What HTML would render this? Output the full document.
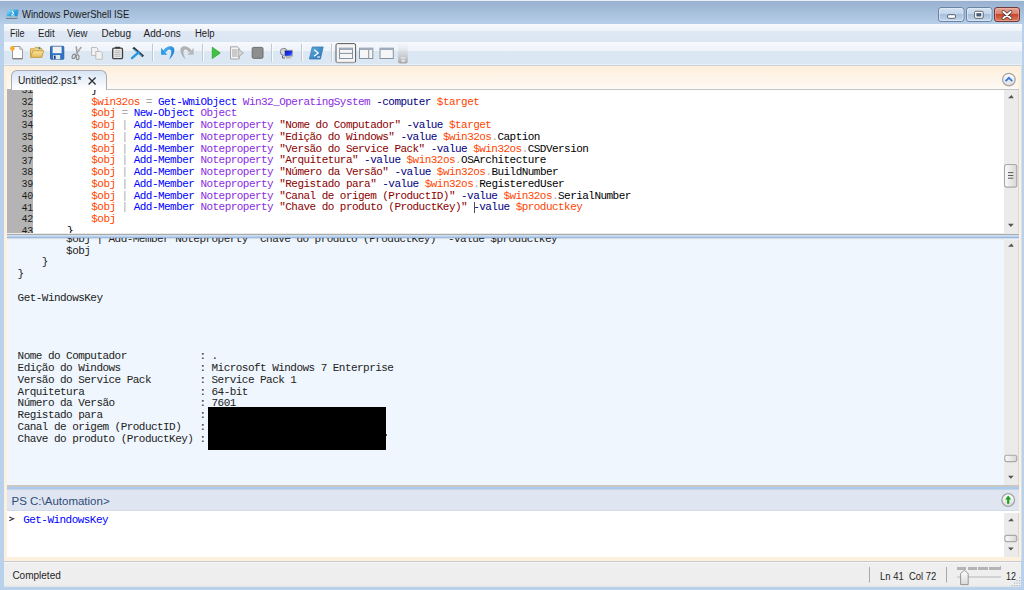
<!DOCTYPE html>
<html><head><meta charset="utf-8">
<style>
*{margin:0;padding:0;box-sizing:border-box}
html,body{width:1024px;height:590px;overflow:hidden;background:#b9d1ea;font-family:"Liberation Sans",sans-serif}
.a{position:absolute}
#title{left:0;top:0;width:1024px;height:24px;background:linear-gradient(#97b0cf,#b6cee7)}
#topline{left:0;top:0;width:1024px;height:1px;background:#e9eff6}
#ttext{left:22px;top:8.6px;font-size:10.4px;color:#1a1a1a;white-space:pre;transform-origin:0 0;transform:scaleX(0.915)}
#menu{left:4px;top:24px;width:1018px;height:18px;background:linear-gradient(#f7fafd 0,#eef3fa 7px,#dfe8f4 7px,#dce6f3 100%)}
#tool{left:4px;top:42px;width:1018px;height:23px;background:linear-gradient(#f6f9fd 0,#eef3fa 9px,#dce7f4 9px,#dce7f4 22px,#e8f0fa 22px)}
#toolline{left:4px;top:65px;width:1018px;height:1px;background:#cdd2d8}
.mi{position:absolute;top:28.3px;font-size:10px;color:#1e1e1e;white-space:pre;transform-origin:0 0}
#tabs{left:4px;top:66px;width:1018px;height:23px;background:linear-gradient(#fdeedb,#fefaf5)}
#lframe{left:4px;top:66px;width:3px;height:495px;background:#fdf0df}
#rframe{left:1018px;top:66px;width:4px;height:495px;background:linear-gradient(90deg,#fdf0df 0,#fdf0df 3px,#d4dde8 3px)}
#tab{left:11px;top:70px;width:96px;height:20px;z-index:2;border:1px solid #a8adb4;border-bottom:none;border-radius:6px 6px 0 0;background:linear-gradient(#d9e5f5,#ffffff)}
#tabtext{z-index:3;left:18.3px;top:75px;font-size:10px;color:#1e1e1e;white-space:pre;transform-origin:0 0;transform:scaleX(1.02)}
#editor{left:7px;top:89px;width:1012px;height:145px;background:#fff;border-top:1px solid #c4c4c4}
#gutter{left:7px;top:89px;width:26px;height:144px;background:#b4b4b4}
.code{position:absolute;font-family:"Liberation Mono",monospace;font-size:11px;letter-spacing:-0.54px;white-space:pre;line-height:11.75px}
.ln{position:absolute;font-family:"Liberation Mono",monospace;font-size:10px;letter-spacing:-0.3px;white-space:pre;line-height:11.75px;color:#1e1e1e;text-align:right;width:25px}
.v{color:#ff4500}.c{color:#0000ff}.g{color:#8a2be2}.p{color:#000080}.s{color:#8b0000}.o{color:#a9a9a9}.k{color:#000}
#split1{left:7px;top:233px;width:1012px;height:7px;background:linear-gradient(#ebebea 0,#ebebea 1px,#ababab 1px,#ababab 2px,#cfdff0 2px,#cfdff0 3px,#b6d3f4 3px,#b6d3f4 4px,#9fbada 4px,#9fbada 5px,#d5dde5 5px,#d5dde5 6px,#eaf2fb 6px)}
#split1b{display:none}
#output{left:7px;top:240px;width:1012px;height:245px;background:#eff6fd}
#split2{left:7px;top:485px;width:1012px;height:5px;background:linear-gradient(#c9c7c3 0,#c9c7c3 2px,#aacaf0 2px,#aacaf0 4px,#c6d3e2 4px)}
#split2b{display:none}
#cmdhdr{left:7px;top:490px;width:1012px;height:21px;background:linear-gradient(#dfe6f1 0,#dfe6f1 20px,#d4dce8 20px)}
#cmd{left:7px;top:511px;width:1012px;height:46px;background:#fff}
#cmdbot{left:4px;top:557px;width:1017px;height:4px;background:#fdf0df}
#status{left:4px;top:561px;width:1017px;height:26px;background:linear-gradient(#c8c9cc 0,#c8c9cc 1px,#f6f6f6 1px,#f6f6f6 2px,#efefef 2px,#eeeeee 24px,#e6e6e6 25px)}
#pstext{left:11.5px;top:495px;font-size:11.5px;color:#2f4c78;white-space:pre;transform-origin:0 0;transform:scaleX(1.0)}
#completed{left:12.4px;top:569.8px;font-size:10px;color:#1e1e1e;white-space:pre}
#lncol{left:880px;top:570px;font-size:10.5px;color:#1e1e1e;white-space:pre;transform-origin:0 0;transform:scaleX(0.9)}
#zoom{left:1005.6px;top:570px;font-size:10.5px;color:#1e1e1e;white-space:pre;transform-origin:0 0;transform:scaleX(0.85)}
</style></head><body>
<div class="a" id="title"></div>
<div class="a" id="topline"></div>
<div class="a" id="ttext">Windows PowerShell ISE</div>
<div class="a" id="menu"></div>
<div class="mi" style="left:10.3px;transform:scaleX(0.91)">File</div>
<div class="mi" style="left:38.2px;transform:scaleX(0.96)">Edit</div>
<div class="mi" style="left:67.2px;transform:scaleX(0.95)">View</div>
<div class="mi" style="left:101.5px;transform:scaleX(1.0)">Debug</div>
<div class="mi" style="left:143.5px;transform:scaleX(1.0)">Add-ons</div>
<div class="mi" style="left:194.7px;transform:scaleX(0.95)">Help</div>
<div class="a" id="tool"></div>
<div class="a" id="toolline"></div>
<div class="a" id="tabs"></div>
<div class="a" id="lframe"></div>
<div class="a" id="rframe"></div>
<div class="a" id="tab"></div>
<div class="a" id="tabtext">Untitled2.ps1*</div>
<div class="a" id="editor"></div>
<div class="a" id="gutter"></div>
<div class="a" id="split1"></div>
<div class="a" id="split1b"></div>
<div class="a" id="output"></div>
<div class="a" id="split2"></div>
<div class="a" id="split2b"></div>
<div class="a" id="cmdhdr"></div>
<div class="a" id="cmd"></div>
<div class="a" id="cmdbot"></div>
<div class="a" id="status"></div>
<div class="a" id="pstext">PS C:\Automation&gt;</div>
<div class="a" id="completed">Completed</div>
<div class="a" id="lncol">Ln 41  Col 72</div>
<div class="a" id="zoom">12</div>
<div class="a" style="left:7px;top:90px;width:997px;height:143px;overflow:hidden">
<div class="code" style="left:35.8px;top:-5.1px">        <span class="k">}</span>
        <span class="v">$win32os</span> <span class="o">=</span> <span class="c">Get-WmiObject</span> <span class="g">Win32_OperatingSystem</span> <span class="p">-computer</span> <span class="v">$target</span>
        <span class="v">$obj</span> <span class="o">=</span> <span class="c">New-Object</span> <span class="g">Object</span>
        <span class="v">$obj</span> <span class="o">|</span> <span class="c">Add-Member</span> <span class="g">Noteproperty</span> <span class="s">"Nome do Computador"</span> <span class="p">-value</span> <span class="v">$target</span>
        <span class="v">$obj</span> <span class="o">|</span> <span class="c">Add-Member</span> <span class="g">Noteproperty</span> <span class="s">"Edição do Windows"</span> <span class="p">-value</span> <span class="v">$win32os</span><span class="o">.</span><span class="k">Caption</span>
        <span class="v">$obj</span> <span class="o">|</span> <span class="c">Add-Member</span> <span class="g">Noteproperty</span> <span class="s">"Versão do Service Pack"</span> <span class="p">-value</span> <span class="v">$win32os</span><span class="o">.</span><span class="k">CSDVersion</span>
        <span class="v">$obj</span> <span class="o">|</span> <span class="c">Add-Member</span> <span class="g">Noteproperty</span> <span class="s">"Arquitetura"</span> <span class="p">-value</span> <span class="v">$win32os</span><span class="o">.</span><span class="k">OSArchitecture</span>
        <span class="v">$obj</span> <span class="o">|</span> <span class="c">Add-Member</span> <span class="g">Noteproperty</span> <span class="s">"Número da Versão"</span> <span class="p">-value</span> <span class="v">$win32os</span><span class="o">.</span><span class="k">BuildNumber</span>
        <span class="v">$obj</span> <span class="o">|</span> <span class="c">Add-Member</span> <span class="g">Noteproperty</span> <span class="s">"Registado para"</span> <span class="p">-value</span> <span class="v">$win32os</span><span class="o">.</span><span class="k">RegisteredUser</span>
        <span class="v">$obj</span> <span class="o">|</span> <span class="c">Add-Member</span> <span class="g">Noteproperty</span> <span class="s">"Canal de origem (ProductID)"</span> <span class="p">-value</span> <span class="v">$win32os</span><span class="o">.</span><span class="k">SerialNumber</span>
        <span class="v">$obj</span> <span class="o">|</span> <span class="c">Add-Member</span> <span class="g">Noteproperty</span> <span class="s">"Chave do produto (ProductKey)"</span> <span class="p">-value</span> <span class="v">$productkey</span>
        <span class="v">$obj</span>
    <span class="k">}</span></div>
<div class="ln" style="left:1px;top:-5.0px">31
32
33
34
35
36
37
38
39
40
41
42
43</div>
<div class="a" style="left:467px;top:112px;width:1px;height:11px;background:#505050"></div>
</div>
<div class="a" style="left:7px;top:238px;width:997px;height:247px;overflow:hidden">
<div class="code" style="left:10.6px;top:-4.2px;color:#222">        $obj | Add-Member Noteproperty "Chave do produto (ProductKey)" -value $productkey
        $obj
    }
}

Get-WindowsKey




Nome do Computador            : .
Edição do Windows             : Microsoft Windows 7 Enterprise
Versão do Service Pack        : Service Pack 1
Arquitetura                   : 64-bit
Número da Versão              : 7601
Registado para                : 
Canal de origem (ProductID)   : 
Chave do produto (ProductKey) : </div>
</div>
<div class="code" style="left:23.2px;top:514.6px;color:#0000ff">Get-WindowsKey</div>
<div class="a" style="left:208px;top:407px;width:178px;height:43px;background:#000"></div>
<div class="a" style="left:386px;top:434px;width:1px;height:2px;background:#555"></div>
<svg class="a" style="left:0;top:0;z-index:4" width="1024" height="590" viewBox="0 0 1024 590">
<defs>
<linearGradient id="gbtn" x1="0" y1="0" x2="0" y2="1"><stop offset="0" stop-color="#d6e4f3"/><stop offset="0.45" stop-color="#c3d6eb"/><stop offset="0.47" stop-color="#a5bedb"/><stop offset="1" stop-color="#c6d9ee"/></linearGradient>
<linearGradient id="gcls" x1="0" y1="0" x2="0" y2="1"><stop offset="0" stop-color="#eaa898"/><stop offset="0.45" stop-color="#dc806c"/><stop offset="0.47" stop-color="#c5432a"/><stop offset="1" stop-color="#e08060"/></linearGradient>
<linearGradient id="gps" x1="0" y1="0" x2="1" y2="1"><stop offset="0" stop-color="#8fdcf6"/><stop offset="0.5" stop-color="#2a9ee0"/><stop offset="1" stop-color="#1770b8"/></linearGradient>
<linearGradient id="gps2" x1="0" y1="0" x2="1" y2="1"><stop offset="0" stop-color="#5ab0e0"/><stop offset="1" stop-color="#2a70b4"/></linearGradient>
<linearGradient id="gcirc" x1="0" y1="0" x2="0" y2="1"><stop offset="0" stop-color="#ffffff"/><stop offset="1" stop-color="#dcdcdc"/></linearGradient>
<linearGradient id="gthumb" x1="0" y1="0" x2="1" y2="0"><stop offset="0" stop-color="#fbfbfb"/><stop offset="1" stop-color="#d6d6d6"/></linearGradient>
<linearGradient id="gover" x1="0" y1="0" x2="0" y2="1"><stop offset="0" stop-color="#eeeeee" stop-opacity="0.2"/><stop offset="1" stop-color="#a8a8a8"/></linearGradient>
<linearGradient id="gfold" x1="0" y1="0" x2="0" y2="1"><stop offset="0" stop-color="#fbe7a0"/><stop offset="1" stop-color="#e2b858"/></linearGradient>
<linearGradient id="gthumb2" x1="0" y1="0" x2="0" y2="1"><stop offset="0" stop-color="#ffffff"/><stop offset="1" stop-color="#dadada"/></linearGradient>
</defs>
<!-- title icon -->
<linearGradient id="gti" x1="0" y1="0" x2="1" y2="1"><stop offset="0" stop-color="#a8ecff"/><stop offset="0.45" stop-color="#30a8e4"/><stop offset="1" stop-color="#0a7ac8"/></linearGradient>
<path d="M7.8,9.6 H18.6 L17.2,18.6 H6.2 Z" fill="url(#gti)" stroke="#8ab0c8" stroke-width="0.5"/>
<path d="M6.5,17.1 H17.4" stroke="#ecd6ce" stroke-width="1.2"/>
<path d="M6.2,18.4 H17.2" stroke="#707880" stroke-width="0.9"/>
<path d="M12,10.9 L13.6,13.3 L11.5,15.4" stroke="#ffffff" stroke-width="1.1" fill="none"/>
<path d="M12.6,15.8 H14.6" stroke="#e8f8ff" stroke-width="0.9"/>
<!-- window buttons -->
<rect x="938.5" y="7.5" width="25.5" height="14" rx="2.5" fill="url(#gbtn)" stroke="#6c83a3"/>
<rect x="939.5" y="8.5" width="23.5" height="12" rx="2" fill="none" stroke="#e4eef9" stroke-opacity="0.6"/>
<rect x="947.5" y="14.7" width="8" height="3.6" rx="1.3" fill="#ffffff" stroke="#4c5664" stroke-width="0.9"/>
<rect x="966.5" y="7.5" width="25.5" height="14" rx="2.5" fill="url(#gbtn)" stroke="#6c83a3"/>
<rect x="967.5" y="8.5" width="23.5" height="12" rx="2" fill="none" stroke="#e4eef9" stroke-opacity="0.6"/>
<rect x="974.6" y="11.3" width="8.6" height="7" rx="1.2" fill="#ffffff" stroke="#4c5664" stroke-width="0.9"/>
<rect x="976.8" y="13.5" width="4.2" height="2.6" fill="#445e88" stroke="#4c5664" stroke-width="0.6"/>
<rect x="994.5" y="7.5" width="25" height="14" rx="2.5" fill="url(#gcls)" stroke="#6e3a3a"/>
<rect x="995.5" y="8.5" width="23" height="12" rx="2" fill="none" stroke="#f4c0b0" stroke-opacity="0.5"/>
<path d="M1003.3,11.8 L1010.7,18.2 M1010.7,11.8 L1003.3,18.2" stroke="#4a3434" stroke-width="3.4" stroke-linecap="round"/>
<path d="M1003.3,11.8 L1010.7,18.2 M1010.7,11.8 L1003.3,18.2" stroke="#ffffff" stroke-width="1.9" stroke-linecap="round"/>
<!-- toolbar: new -->
<path d="M12.5,46.5 H19.8 L22.5,49.2 V59 H12.5 Z" fill="#fdfdfd" stroke="#9c9c9c"/>
<path d="M19.8,46.5 V49.2 H22.5" fill="#dedede" stroke="#a8a8a8"/>
<path d="M12.8,58.6 H22.3" stroke="#7a7a7a" stroke-width="1"/>
<circle cx="12.4" cy="48.4" r="2.3" fill="#f7ad2e"/>
<!-- open -->
<path d="M30.5,56.8 V48.8 H34 L35.2,47.4 H40 L41,48.8 H42 V56.8 Z" fill="#f0d078" stroke="#c8a040" stroke-width="0.9"/>
<path d="M30.6,57.4 L32.8,50.8 H43.8 L41.6,57.4 Z" fill="url(#gfold)" stroke="#c29c44" stroke-width="0.9"/>
<circle cx="39.5" cy="48.2" r="1" fill="#2a80d0"/>
<!-- save -->
<rect x="50.5" y="46.3" width="13.3" height="13" rx="0.8" fill="#2f72c4" stroke="#2a5ea8" stroke-width="0.9"/>
<rect x="52.6" y="46.6" width="9" height="6.6" fill="#f2f2f2"/>
<rect x="53.2" y="55" width="7" height="4.3" fill="#dfe6ee"/>
<rect x="54" y="55.6" width="1.6" height="3.5" fill="#1c3a70"/>
<!-- cut -->
<path d="M76.2,46.4 L77.2,53.8" stroke="#9c9c9c" stroke-width="1.5"/>
<path d="M81.3,47 L76.4,53.8" stroke="#a4a4a4" stroke-width="1.5"/>
<ellipse cx="73.8" cy="56.3" rx="1.5" ry="2.3" transform="rotate(25 73.8 56.3)" fill="#e8e8e8" stroke="#858585" stroke-width="1.1"/>
<ellipse cx="77.6" cy="57.2" rx="1.4" ry="2.4" fill="#e8e8e8" stroke="#858585" stroke-width="1.1"/>
<!-- copy -->
<path d="M91.5,47.5 H96.5 L98,49 V55.5 H91.5 Z" fill="#f2f2f2" stroke="#bdbdbd"/>
<path d="M95.8,51.5 H100.8 L102.3,53 V59.2 H95.8 Z" fill="#f2f2f2" stroke="#bdbdbd"/>
<!-- paste -->
<rect x="112.7" y="48.2" width="9.8" height="10.4" rx="1.2" fill="#ececec" stroke="#3e3e3e" stroke-width="1.3"/>
<path d="M115,48.6 V47.4 Q115,46.8 115.6,46.8 H119.6 Q120.2,46.8 120.2,47.4 V48.6 Z" fill="#3e3e3e"/>
<path d="M114.6,50.8 H120.6 M114.6,52.6 H120.6 M114.6,54.4 H120.6 M114.6,56.2 H120.6" stroke="#a8a8a8" stroke-width="0.8"/>
<!-- clear -->
<path d="M133.2,47.6 L143.2,56.4" stroke="#2c3844" stroke-width="2.4"/>
<path d="M134.2,49.6 L141.6,56.2" stroke="#5ab8ea" stroke-width="1.2"/>
<path d="M138.6,52.4 L132,58.2" stroke="#2a98e0" stroke-width="2.4" stroke-linecap="round"/>
<!-- separators -->
<g stroke-width="1">
<path d="M152.5,43.7 V61.7 M202.5,43.7 V61.7 M271.5,43.7 V61.7 M301.5,43.7 V61.7 M331.5,43.7 V61.7" stroke="#c2c9d2"/>
<path d="M153.5,43.7 V61.7 M203.5,43.7 V61.7 M272.5,43.7 V61.7 M302.5,43.7 V61.7 M332.5,43.7 V61.7" stroke="#f8fbfe"/>
</g>
<!-- undo -->
<linearGradient id="gundo" x1="0" y1="0" x2="1" y2="1"><stop offset="0" stop-color="#4cb8f4"/><stop offset="1" stop-color="#1670c4"/></linearGradient>
<path d="M163.2,50.6 C165.5,46.5 171.5,44.6 173.8,47.8 C175.6,50.6 173.4,56 168.8,59.8 C171.2,55.6 172,51.6 170.6,50 C169.2,48.6 166.8,50.2 165.8,52.6 Z" fill="url(#gundo)"/>
<path d="M161.1,47.7 L161.1,54.7 L167.2,54.7 Z" fill="#2a98e4"/>
<g transform="matrix(-1,0,0,1,354.8,0)">
<path d="M163.2,50.6 C165.5,46.5 171.5,44.6 173.8,47.8 C175.6,50.6 173.4,56 168.8,59.8 C171.2,55.6 172,51.6 170.6,50 C169.2,48.6 166.8,50.2 165.8,52.6 Z" fill="#b2b2b2"/>
<path d="M161.1,47.7 L161.1,54.7 L167.2,54.7 Z" fill="#b8b8b8"/>
</g>
<!-- run -->
<path d="M212.3,47.2 L220.2,52.9 L212.3,58.6 Z" fill="#3ec43e" stroke="#2e9e2e" stroke-width="0.8"/>
<!-- run selection -->
<path d="M230.5,46.8 H237.5 L239.2,48.5 V59 H230.5 Z" fill="#f4f4f4" stroke="#a4a4a4"/>
<path d="M232,50 H237 M232,52 H237 M232,54 H237 M232,56 H237" stroke="#8c8c8c" stroke-width="0.8"/>
<path d="M238.2,48.8 L243.4,53 L238.2,57.2 Z" fill="#d4d4d4" stroke="#a0a0a0" stroke-width="0.8"/>
<!-- stop -->
<rect x="252.2" y="47.4" width="10.8" height="10.9" rx="1.3" fill="#8e8e8e" stroke="#6c6c6c"/>
<!-- remote -->
<circle cx="283.8" cy="51.8" r="3.5" fill="#d4dade" stroke="#7c848c" stroke-width="1"/>
<path d="M282.5,55.6 V58 H285" stroke="#555" stroke-width="0.9" fill="none"/>
<linearGradient id="gmon" x1="0" y1="0" x2="1" y2="1"><stop offset="0" stop-color="#0818b8"/><stop offset="0.6" stop-color="#1838f0"/><stop offset="1" stop-color="#7aa0ff"/></linearGradient>
<rect x="284.6" y="50.2" width="8" height="6" fill="url(#gmon)" stroke="#b8b090" stroke-width="0.8"/>
<path d="M286,57.8 H291" stroke="#b4b4b4" stroke-width="1.4"/>
<!-- ps icon -->
<path d="M312.3,47 H323.2 L320.4,59 H309.4 Z" fill="url(#gps2)" stroke="#3a7ab0" stroke-width="0.8" stroke-linejoin="round"/>
<path d="M314.2,49.8 L318.2,53 L314,56.2" stroke="#ffffff" stroke-width="1.3" fill="none"/>
<path d="M317.2,57 H320" stroke="#ffffff" stroke-width="1.1"/>
<!-- layout pressed -->
<rect x="336" y="43.6" width="19.6" height="19" rx="1.6" fill="#f4f4f4" stroke="#585858"/>
<path d="M336.5,62 H355" stroke="#d8d8d8"/>
<rect x="339.5" y="48.2" width="13" height="10.3" fill="#f6f6f6" stroke="#8592a2"/>
<rect x="339.5" y="48.2" width="13" height="1.8" fill="#9eabbb"/>
<path d="M339.5,53.4 H352.5" stroke="#8592a2"/>
<rect x="359.5" y="48.2" width="13.3" height="10.3" fill="#f6f6f6" stroke="#8592a2"/>
<rect x="359.5" y="48.2" width="13.3" height="1.8" fill="#9eabbb"/>
<path d="M368.7,50 V58.5" stroke="#8592a2"/>
<rect x="380" y="48.2" width="13.3" height="10.3" fill="#f6f6f6" stroke="#8592a2"/>
<rect x="380" y="48.2" width="13.3" height="1.8" fill="#9eabbb"/>
<!-- overflow -->
<rect x="398" y="43.2" width="9.8" height="20.2" rx="2" fill="url(#gover)"/>
<path d="M401,58 H405.5 M401.5,59.8 L403.3,61.4 L405,59.8" stroke="#f4f4f4" stroke-width="1.1" fill="none"/>
<!-- tab close -->
<path d="M88.6,77.6 L95.6,84.6 M95.6,77.6 L88.6,84.6" stroke="#333" stroke-width="1.35"/>
<!-- editor collapse circle -->
<circle cx="1008.9" cy="79.6" r="6.3" fill="url(#gcirc)" stroke="#a4a4a4" stroke-width="1.3"/>
<path d="M1005.6,81.1 L1008.9,77.8 L1012.2,81.1" stroke="#3a7ad8" stroke-width="1.9" fill="none"/>
<!-- cmd expand circle -->
<circle cx="1008.2" cy="500" r="6.3" fill="url(#gcirc)" stroke="#a4a4a4" stroke-width="1.3"/>
<path d="M1008.2,503.8 V498.6" stroke="#1aa01a" stroke-width="2.2"/>
<path d="M1005.2,499.4 L1008.2,495.6 L1011.2,499.4 Z" fill="#1aa01a"/>
<path d="M9.2,516.9 L13.6,518.8 L9.2,520.7" stroke="#333" stroke-width="1.1" fill="none"/>
<!-- scrollbars -->
<rect x="1004" y="90" width="15" height="143" fill="#ebebeb"/>
<path d="M1018.5,90 V233" stroke="#d8d8d8"/>
<path d="M1008,98.3 L1013.7,98.3 L1011.6,94.9 Z" fill="#555"/>
<path d="M1008,223.8 L1013.7,223.8 L1010.85,227.1 Z" fill="#555"/>
<rect x="1004.5" y="164.5" width="12.3" height="22.6" rx="2.2" fill="url(#gthumb)" stroke="#a8a8a8" stroke-width="1.1"/>
<path d="M1008,172.6 H1013.3 M1008,175.5 H1013.3 M1008,178.2 H1013.3" stroke="#5a5a5a" stroke-width="1"/>
<rect x="1004" y="240" width="15" height="245" fill="#ebebeb"/>
<path d="M1018.5,240 V485" stroke="#d8d8d8"/>
<path d="M1008,246.8 L1013.7,246.8 L1011.6,243.6 Z" fill="#555"/>
<path d="M1008,475.8 L1013.7,475.8 L1010.85,478.8 Z" fill="#555"/>
<rect x="1004.8" y="455.2" width="12" height="6.4" rx="2" fill="url(#gthumb)" stroke="#a8a8a8" stroke-width="1.1"/>
<rect x="1004" y="513" width="15" height="44" fill="#ebebeb"/>
<path d="M1018.5,513 V557" stroke="#d8d8d8"/>
<path d="M1008,521.3 L1013.7,521.3 L1011.6,518.2 Z" fill="#555"/>
<path d="M1008,547.5 L1013.7,547.5 L1010.85,550.5 Z" fill="#555"/>
<rect x="1004.8" y="535.4" width="12" height="6.2" rx="2" fill="url(#gthumb)" stroke="#a8a8a8" stroke-width="1.1"/>
<!-- status bar -->
<path d="M869.5,567 V582.5 M946.5,567 V582.5" stroke="#a8a8a8"/>
<path d="M957.8,577.1 H1000.4" stroke="#c6cac8" stroke-width="1.5" stroke-linecap="round"/>
<g fill="#8c8c8c" fill-opacity="0.6"><rect x="957" y="567" width="9" height="3"/><rect x="968" y="567" width="9" height="3"/><rect x="978" y="567" width="10" height="3"/><rect x="989" y="567" width="11" height="3"/><rect x="1000" y="566" width="1" height="4"/></g>
<path d="M960.6,573.6 L964.4,570.3 L968.2,573.6 V584.6 H960.6 Z" fill="url(#gthumb2)" stroke="#8c8c8c" stroke-width="0.9"/>
<g fill="#a9b6c8"><rect x="1019" y="577" width="1.2" height="1.2"/><rect x="1016.5" y="580" width="1.2" height="1.2"/><rect x="1019" y="580" width="1.2" height="1.2"/><rect x="1014" y="582.5" width="1.2" height="1.2"/><rect x="1016.5" y="582.5" width="1.2" height="1.2"/><rect x="1019" y="582.5" width="1.2" height="1.2"/><rect x="1011.5" y="585" width="1.2" height="1.2"/><rect x="1014" y="585" width="1.2" height="1.2"/><rect x="1016.5" y="585" width="1.2" height="1.2"/><rect x="1019" y="585" width="1.2" height="1.2"/></g>
</svg>

</body></html>
